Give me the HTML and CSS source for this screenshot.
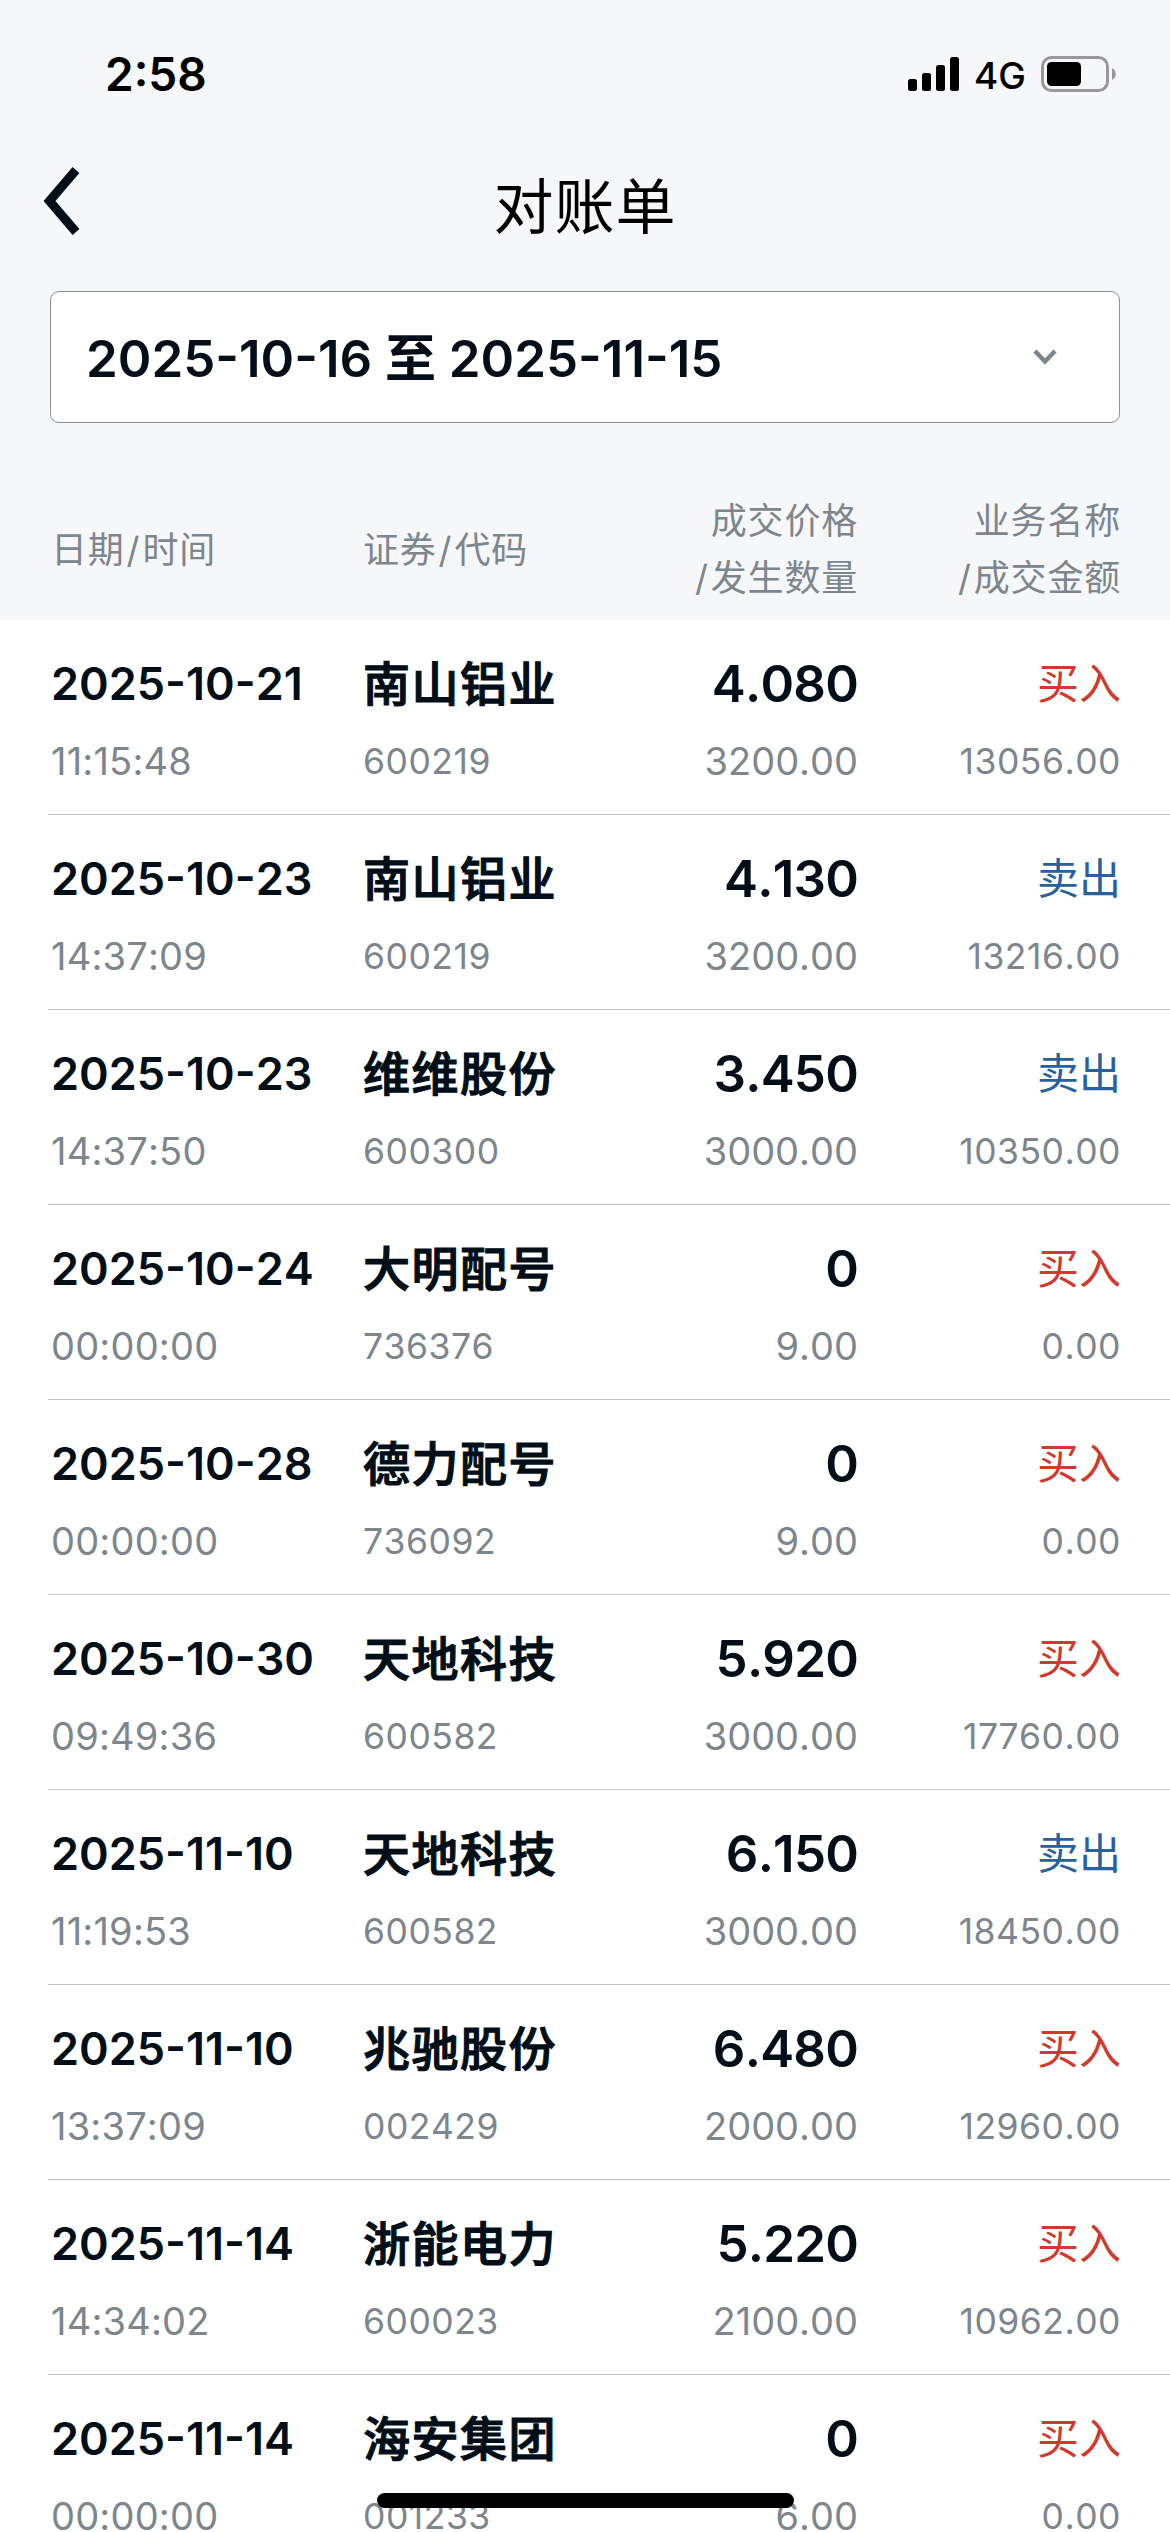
FILE: index.html
```html
<!DOCTYPE html>
<html lang="zh-CN">
<head>
    <meta charset="UTF-8">
    <meta name="viewport" content="width=device-width, initial-scale=1.0">
    <title>对账单</title>
    <link rel="stylesheet" href="styles.css">
</head>
<body>
    <div class="top">
        <div class="status">
            <span class="clock">2:58</span>
            <div class="status-icons">
                <svg width="51" height="36" viewBox="0 0 51 36">
                    <rect x="0" y="23" width="9" height="12" rx="2.5"/>
                    <rect x="14" y="17" width="9" height="18" rx="2.5"/>
                    <rect x="28" y="9" width="9" height="26" rx="2.5"/>
                    <rect x="42" y="1" width="9" height="34" rx="2.5"/>
                </svg>
                <span class="network">4G</span>
                <svg width="75" height="36" viewBox="0 0 75 36">
                    <rect x="1.5" y="1.5" width="65" height="33" rx="9" fill="none" stroke="#98989b" stroke-width="3"/>
                    <rect x="6" y="6" width="34" height="24" rx="4.5"/>
                    <path d="M71 12c5 2.5 5 9.500 0 12z" fill="#98989b"/>
                </svg>
            </div>
        </div>
        <div class="nav">
            <svg class="back" width="38" height="70" viewBox="0 0 38 70">
                <path d="M33 4L6.500 35L33 66" fill="none" stroke="#020f18" stroke-width="9"/>
            </svg>
            <h1>对账单</h1>
        </div>
        <div class="range">
            <span>2025-10-16 至 2025-11-15</span>
            <svg width="24" height="18" viewBox="0 0 24 18">
                <path d="M2 3l10 10.500L22 3" fill="none" stroke="#7d868d" stroke-width="4.500"/>
            </svg>
        </div>
        <div class="row head">
            <div>日期<i>/</i>时间</div>
            <div>证券<i>/</i>代码</div>
            <div class="right">成交价格<br><i>/</i>发生数量</div>
            <div class="right">业务名称<br><i>/</i>成交金额</div>
        </div>
    </div>
    <div id="list"></div>
    <div class="home-bar"></div>

    <script>
        var records = [
            ["2025-10-21", "11:15:48", "南山铝业", "600219", "4.080", "3200.00", "买入", "13056.00"],
            ["2025-10-23", "14:37:09", "南山铝业", "600219", "4.130", "3200.00", "卖出", "13216.00"],
            ["2025-10-23", "14:37:50", "维维股份", "600300", "3.450", "3000.00", "卖出", "10350.00"],
            ["2025-10-24", "00:00:00", "大明配号", "736376", "0", "9.00", "买入", "0.00"],
            ["2025-10-28", "00:00:00", "德力配号", "736092", "0", "9.00", "买入", "0.00"],
            ["2025-10-30", "09:49:36", "天地科技", "600582", "5.920", "3000.00", "买入", "17760.00"],
            ["2025-11-10", "11:19:53", "天地科技", "600582", "6.150", "3000.00", "卖出", "18450.00"],
            ["2025-11-10", "13:37:09", "兆驰股份", "002429", "6.480", "2000.00", "买入", "12960.00"],
            ["2025-11-14", "14:34:02", "浙能电力", "600023", "5.220", "2100.00", "买入", "10962.00"],
            ["2025-11-14", "00:00:00", "海安集团", "001233", "0", "6.00", "买入", "0.00"]
        ];

        document.getElementById('list').innerHTML = records.map(function (r) {
            var side = r[6] === "买入" ? "buy" : "sell";
            return `
            <div class="row item">
                <div>
                    <div class="main">${r[0]}</div>
                    <div class="sub time">${r[1]}</div>
                </div>
                <div>
                    <div class="main name">${r[2]}</div>
                    <div class="sub small">${r[3]}</div>
                </div>
                <div class="right">
                    <div class="main price">${r[4]}</div>
                    <div class="sub">${r[5]}</div>
                </div>
                <div class="right">
                    <div class="main type ${side}">${r[6]}</div>
                    <div class="sub small">${r[7]}</div>
                </div>
            </div>`;
        }).join("");
    </script>
</body>
</html>
```

FILE: styles.css
```css
body {
    margin: 0;
    width: 1170px;
    height: 2532px;
    overflow: hidden;
    position: relative;
    background-color: #fff;
    color: #020f18;
    font-family: Inter, "Noto Sans CJK SC", sans-serif;
}
.top {
    height: 620px;
    background-color: #f6f7f9;
}
.status {
    height: 148px;
    display: flex;
    justify-content: space-between;
    align-items: center;
    padding: 0 54px 0 105px;
    box-sizing: border-box;
    color: #000;
}
.clock {
    font-size: 46px;
    font-weight: 600;
}
.status-icons {
    display: flex;
    align-items: center;
}
.network {
    font-size: 37px;
    font-weight: 450;
    margin: 2px 15px 0;
}
.nav {
    height: 143px;
    position: relative;
}
.nav h1 {
    margin: 0;
    padding-top: 2px;
    text-align: center;
    font-size: 60px;
    font-weight: 400;
    letter-spacing: 1px;
    line-height: 115px;
    color: #000;
}
.back {
    position: absolute;
    left: 43px;
    top: 18px;
}
.range {
    height: 132px;
    margin: 0 50px;
    padding: 0 62px 4px 35px;
    box-sizing: border-box;
    border: 1px solid #8a9095;
    border-radius: 9px;
    background-color: #fff;
    display: flex;
    justify-content: space-between;
    align-items: center;
    font-size: 51px;
    font-weight: 600;
}
.range svg {
    margin-top: 4px;
}
.row {
    display: grid;
    grid-template-columns: 312px 250px 245px 263px;
    margin-left: 48px;
    padding-left: 3px;
}
.head {
    padding-top: 70px;
    align-items: center;
    font-size: 36px;
    line-height: 57px;
    letter-spacing: 0.8px;
    color: #7d868d;
}
.head i {
    font-style: normal;
    margin: 0 2px;
}
.right {
    text-align: right;
}
.item {
    height: 195px;
    box-sizing: border-box;
    border-bottom: 1px solid #c3c4c6;
    padding-top: 26px;
    font-kerning: none;
}
.main {
    height: 75px;
    line-height: 75px;
    font-size: 45px;
    font-weight: 600;
    white-space: nowrap;
}
.sub {
    height: 80px;
    line-height: 81px;
    font-size: 38px;
    color: #7d868d;
}
.time {
    letter-spacing: 0.2px;
}
.name {
    font-size: 47px;
    font-weight: 500;
    letter-spacing: 1.5px;
    -webkit-text-stroke: 1.2px #020f18;
}
.small {
    font-size: 35.5px;
    letter-spacing: 0.5px;
}
.price {
    font-size: 51px;
    letter-spacing: -0.8px;
}
.type {
    font-size: 42px;
    font-weight: 400;
}
.buy {
    color: #cf3a2c;
}
.sell {
    color: #28629e;
}
.home-bar {
    position: absolute;
    left: 377px;
    bottom: 24px;
    width: 417px;
    height: 15px;
    border-radius: 8px;
    background-color: #000;
}
```
